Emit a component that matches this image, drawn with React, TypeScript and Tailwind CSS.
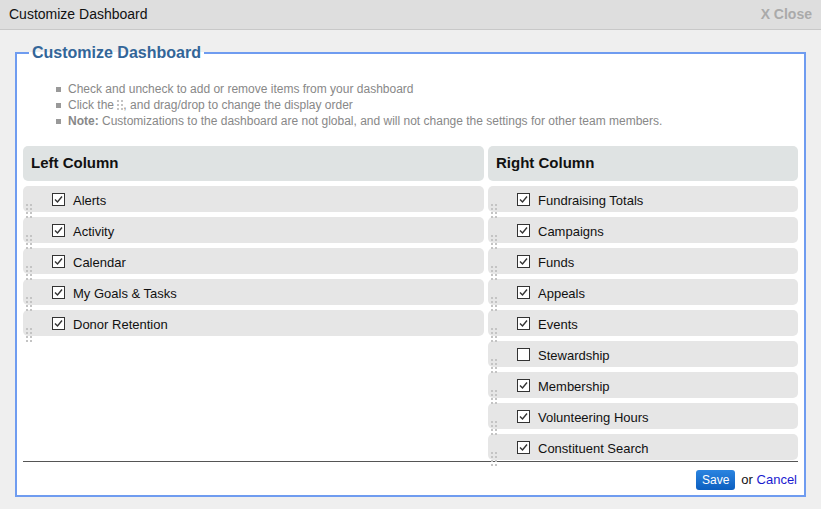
import React from 'react';

const LEFT = ['Alerts', 'Activity', 'Calendar', 'My Goals & Tasks', 'Donor Retention'];
const RIGHT: [string, boolean][] = [
  ['Fundraising Totals', true],
  ['Campaigns', true],
  ['Funds', true],
  ['Appeals', true],
  ['Events', true],
  ['Stewardship', false],
  ['Membership', true],
  ['Volunteering Hours', true],
  ['Constituent Search', true],
];

function Grip({ small }: { small?: boolean }) {
  return (
    <span className={`inline-grid grid-cols-2 gap-x-[2px] gap-y-[2px] ${small ? '' : ''}`}>
      {Array.from({ length: small ? 6 : 8 }).map((_, i) => (
        <span key={i} className="w-[2px] h-[2px] bg-[#c4c4c4]" />
      ))}
    </span>
  );
}

function Box({ checked }: { checked: boolean }) {
  return (
    <span className="w-[13px] h-[13px] border border-[#333] bg-white flex items-center justify-center">
      {checked && (
        <svg width="11" height="11" viewBox="0 0 11 11">
          <path d="M2 5.5 L4.5 8 L9 2.5" stroke="#333" strokeWidth="1.4" fill="none" />
        </svg>
      )}
    </span>
  );
}

function Row({ label, checked }: { label: string; checked: boolean }) {
  return (
    <div className="h-[26px] rounded-[5px] bg-[#e6e6e6] flex items-center pl-[3px] mb-[5px]">
      <span className="pt-[8px]"><Grip /></span>
      <span className="ml-[20px]"><Box checked={checked} /></span>
      <span className="ml-[8px] text-[13px] text-[#111] pt-[3px]">{label}</span>
    </div>
  );
}

export default function App() {
  return (
    <div className="w-[821px] h-[509px] bg-[#efefef] flex flex-col" style={{ fontFamily: 'Arial, "Liberation Sans", sans-serif' }}>
      <div className="h-[30px] bg-[#dedede] border-b border-[#c8c8c8] flex items-center justify-between px-[9px]">
        <span className="text-[14px] text-[#111]">Customize Dashboard</span>
        <span className="text-[14px] font-bold text-[#aaa]">X Close</span>
      </div>
      <fieldset className="mx-[15px] mt-[11px] h-[456px] border-2 border-[#6f9cf0] bg-white px-[6px]">
        <legend className="ml-[6px] px-[3px] text-[16px] font-bold text-[#336699]">Customize Dashboard</legend>
        <ul className="ml-[33px] mt-[16px] text-[12px] leading-[16px] text-[#888]">
          <li className="flex items-center"><span className="w-[5px] h-[5px] bg-[#999] mr-[7px]" />Check and uncheck to add or remove items from your dashboard</li>
          <li className="flex items-center"><span className="w-[5px] h-[5px] bg-[#999] mr-[7px]" />Click the&nbsp;<Grip small />, and drag/drop to change the display order</li>
          <li className="flex items-center"><span className="w-[5px] h-[5px] bg-[#999] mr-[7px]" /><b>Note:</b>&nbsp;Customizations to the dashboard are not global, and will not change the settings for other team members.</li>
        </ul>
        <div className="flex gap-[4px] mt-[17px] h-[318px]">
          <div className="w-[461px]">
            <div className="h-[35px] rounded-[5px] bg-[#dfe3e3] flex items-center px-[8px] mb-[5px] text-[15px] font-bold text-[#111]">Left Column</div>
            {LEFT.map((l) => <Row key={l} label={l} checked />)}
          </div>
          <div className="flex-1">
            <div className="h-[35px] rounded-[5px] bg-[#dfe3e3] flex items-center px-[8px] mb-[5px] text-[15px] font-bold text-[#111]">Right Column</div>
            {RIGHT.map(([l, c]) => <Row key={l} label={l} checked={c} />)}
          </div>
        </div>
        <div className="border-t border-[#555] mt-[-3px]" />
        <div className="flex justify-end items-center mt-[8px] pr-[1px]">
          <button className="h-[20px] px-[6px] rounded-[3px] bg-gradient-to-b from-[#2a84e0] to-[#0b5fc0] text-white text-[12px]">Save</button>
          <span className="ml-[6px] text-[13px] text-[#111]">or <span className="text-[#1a1ad0]">Cancel</span></span>
        </div>
      </fieldset>
    </div>
  );
}
